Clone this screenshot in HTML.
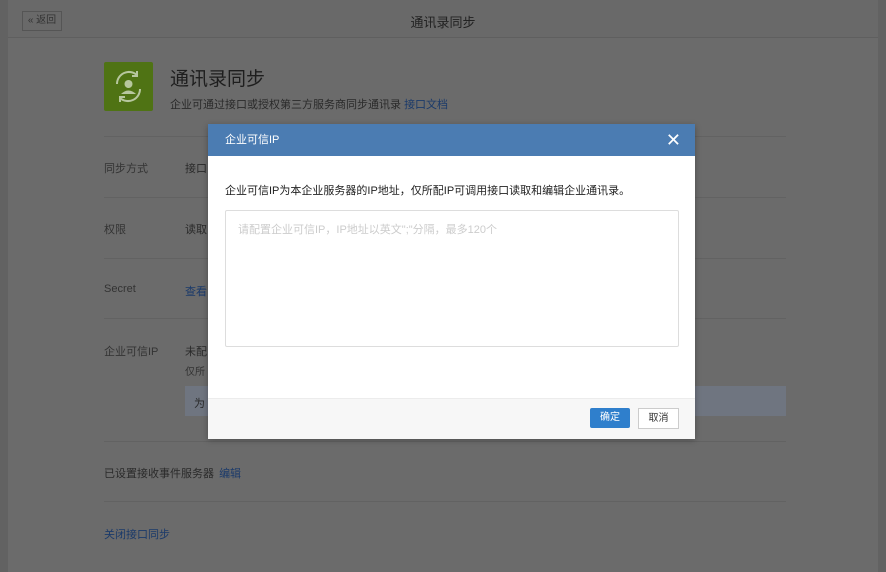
<!DOCTYPE html><html><head><meta charset="utf-8"><style>
body{margin:0;width:886px;height:572px;overflow:hidden;background:#626262;font-family:"Liberation Sans","Noto Sans CJK SC",sans-serif;font-size:12px;position:relative}
.pg{position:absolute;left:8px;top:0;width:870px;height:572px;background:#6b6b6b}
.top{position:absolute;left:0;top:0;width:870px;height:37px;border-bottom:1px solid #5f5f5f;background:#696969}
.back{position:absolute;left:14px;top:11px;width:38px;height:18px;border:1px solid #555;color:#333;font-size:10px;line-height:18px;text-align:center}
.ttl{position:absolute;left:0;width:870px;top:12px;text-align:center;font-size:13px;color:#222}
.a{position:absolute;color:#2a2a2a}
.l{position:absolute;left:96px;width:682px;height:1px;background:#626262}
.dlg{position:absolute;left:208px;top:124px;width:487px;height:314px;background:#fff;box-shadow:0 2px 6px rgba(0,0,0,.3)}
.hd{height:32px;background:#4b7cb2;color:#fff;font-size:11px;line-height:32px;padding-left:17px}
.ft{position:absolute;left:0;top:274px;width:487px;height:40px;background:#f7f7f7;border-top:1px solid #ececec}
</style></head><body>
<div class="pg">
<div class="top"><div class="back">« 返回</div><div class="ttl">通讯录同步</div></div>
<div style="position:absolute;left:96px;top:62px;width:49px;height:49px;background:#4f7314;border-radius:2px"><svg width="49" height="49" fill="none" stroke="#b7c79e" stroke-width="2"><path d="M13 22a12 12 0 0 1 20-9"/><path d="M36 27a12 12 0 0 1-20 9"/><path d="M33 9v5h-5M16 40v-5h5"/><circle cx="24.5" cy="22" r="4" fill="#b7c79e" stroke="none"/><path d="M17 32q7.5-7 15 0z" fill="#b7c79e" stroke="none"/></svg></div>
<div class="a" style="left:162px;top:64px;font-size:19px;color:#1e1e1e">通讯录同步</div>
<div class="a" style="left:162px;top:96px;font-size:11px">企业可通过接口或授权第三方服务商同步通讯录 <span style="color:#1b3a6a">接口文档</span></div>
<div class="l" style="top:136px"></div>
<div class="a" style="left:96px;top:160px;font-size:11px;color:#333">同步方式</div><div class="a" style="left:177px;top:160px;font-size:11px">接口</div>
<div class="l" style="top:197px"></div>
<div class="a" style="left:96px;top:221px;font-size:11px;color:#333">权限</div><div class="a" style="left:177px;top:221px;font-size:11px">读取</div>
<div class="l" style="top:258px"></div>
<div class="a" style="left:96px;top:283px;font-size:11px;color:#333">Secret</div><div class="a" style="left:177px;top:283px;font-size:11px;color:#1b3a6a">查看</div>
<div class="l" style="top:318px"></div>
<div class="a" style="left:96px;top:343px;font-size:11px;color:#333">企业可信IP</div><div class="a" style="left:177px;top:343px;font-size:11px">未配</div>
<div class="a" style="left:177px;top:363px;font-size:10px;color:#333">仅所</div>
<div style="position:absolute;left:177px;top:386px;width:601px;height:30px;background:#6f7580"></div>
<div class="a" style="left:186px;top:395px;font-size:11px">为</div>
<div class="l" style="top:441px"></div>
<div class="a" style="left:96px;top:465px;font-size:11px">已设置接收事件服务器 <span style="color:#1b3a6a;margin-left:2px">编辑</span></div>
<div class="l" style="top:501px"></div>
<div class="a" style="left:96px;top:526px;font-size:11px;color:#1b3a6a">关闭接口同步</div>
</div>
<div class="dlg"><div class="hd">企业可信IP<span style="position:absolute;right:14px;top:0;font-size:18px">✕</span></div>
<div style="position:absolute;left:17px;top:58px;font-size:11px;color:#222">企业可信IP为本企业服务器的IP地址，仅所配IP可调用接口读取和编辑企业通讯录。</div>
<div style="position:absolute;left:17px;top:86px;width:452px;height:135px;border:1px solid #ddd;border-radius:2px"><div style="padding:10px 12px;color:#ccc;font-size:11px">请配置企业可信IP，IP地址以英文";"分隔，最多120个</div></div>
<div class="ft"><div style="position:absolute;left:382px;top:9px;width:40px;height:20px;background:#2f7fcc;color:#fff;font-size:10px;line-height:20px;text-align:center;border-radius:2px">确定</div><div style="position:absolute;left:430px;top:9px;width:39px;height:19px;border:1px solid #ccc;background:#fff;font-size:10px;line-height:19px;text-align:center;color:#333">取消</div></div>
</div>
</body></html>
